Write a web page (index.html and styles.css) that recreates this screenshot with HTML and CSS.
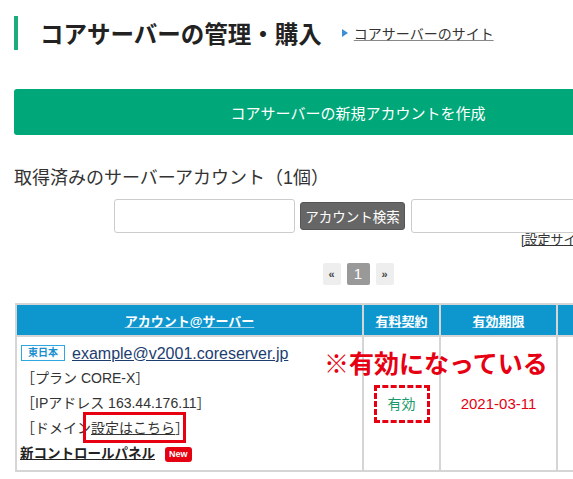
FILE: index.html
```html
<!DOCTYPE html>
<html lang="ja">
  <head>
    <meta charset="UTF-8" />
    <meta name="viewport" content="width=device-width, initial-scale=1.0" />
    <title>コアサーバーの管理・購入</title>
    <link rel="stylesheet" href="styles.css">
  </head>
  <body>
    <div class="main">
      <div class="page-title">
        <h1>コアサーバーの管理・購入</h1>
        <a class="site-link" href="#">コアサーバーのサイト</a>
      </div>

      <button type="button" class="create">コアサーバーの新規アカウントを作成</button>

      <h2 class="section-title">取得済みのサーバーアカウント（1個）</h2>

      <div class="search">
        <input type="text" class="search-input">
        <button type="button" class="search-btn">アカウント検索</button>
        <input type="text" class="search-input wide">
      </div>
      <div class="setting-link"><a href="#">[設定サイト一覧]</a></div>

      <div class="pager">
        <span class="page">«</span>
        <span class="page current">1</span>
        <span class="page">»</span>
      </div>

      <div class="accounts">
        <table class="account-table">
          <tr>
            <th class="col-account"><a href="#">アカウント@サーバー</a></th>
            <th class="col-paid"><a href="#">有料契約</a></th>
            <th class="col-limit"><a href="#">有効期限</a></th>
            <th class="col-extra"></th>
          </tr>
          <tr>
            <td class="account-cell">
              <div class="account-head">
                <span class="region">東日本</span>
                <a class="account-name" href="#">example@v2001.coreserver.jp</a>
              </div>
              <div class="info">［プラン CORE-X］</div>
              <div class="info">［IPアドレス 163.44.176.11］</div>
              <div class="info">［ドメイン<span class="marked"><a href="#">設定はこちら</a>］</span></div>
              <div class="info"><a class="panel-link" href="#">新コントロールパネル</a><span class="new">New</span></div>
            </td>
            <td class="center"><span class="active">有効</span></td>
            <td class="center"><span class="limit">2021-03-11</span></td>
            <td></td>
          </tr>
        </table>
        <p class="note">※有効になっている</p>
      </div>
    </div>
  </body>
</html>
```

FILE: styles.css
```css
html, body {
  overflow: hidden;
}
body {
  margin: 0;
  font-family: "Liberation Sans", "Noto Sans CJK JP", sans-serif;
  color: #333;
  background-color: #fff;
}
a {
  color: inherit;
}
.main {
  width: 688px;
  margin-left: 14px;
}
.page-title {
  display: flex;
  align-items: center;
  height: 34px;
  margin-top: 16px;
  border-left: 4px solid #1bad7b;
  padding-left: 22px;
}
.page-title h1 {
  margin: 0;
  font-size: 23.5px;
  font-weight: bold;
  color: #222;
  font-family: "Noto Sans CJK JP", sans-serif;
}
.site-link {
  position: relative;
  margin-left: 32px;
  font-size: 14px;
  color: #333;
  text-decoration-color: #888;
}
.site-link::before {
  content: "";
  position: absolute;
  left: -12px;
  top: 6px;
  border-left: 6px solid #3d8fd4;
  border-top: 4px solid transparent;
  border-bottom: 4px solid transparent;
}
.create {
  display: block;
  width: 100%;
  height: 46px;
  margin-top: 39px;
  border: none;
  border-radius: 3px;
  background-color: #00a779;
  color: #fff;
  font-family: "Noto Sans CJK JP", sans-serif;
  font-size: 15px;
}
.section-title {
  margin: 31px 0 0;
  font-size: 18px;
  font-weight: normal;
  line-height: 24px;
  color: #333;
}
.search {
  display: flex;
  justify-content: center;
  align-items: center;
  gap: 5px;
  margin-top: 9px;
}
.search-input {
  width: 181px;
  height: 34px;
  box-sizing: border-box;
  border: 1px solid #ccc;
  border-radius: 3px;
}
.search-input.wide {
  width: 191px;
  margin-left: 1px;
}
.search-btn {
  height: 28px;
  width: 105px;
  padding: 0;
  border: 1px solid #555;
  border-radius: 3px;
  background-color: #666;
  color: #fff;
  font-family: "Noto Sans CJK JP", sans-serif;
  font-size: 13.5px;
}
.setting-link {
  padding-left: 507px;
  font-size: 13px;
  line-height: 14px;
  white-space: nowrap;
}
.pager {
  display: flex;
  justify-content: center;
  gap: 6px;
  margin-top: 16px;
}
.page {
  width: 18px;
  height: 22px;
  line-height: 22px;
  text-align: center;
  background-color: #eee;
  border-radius: 2px;
  font-size: 11px;
  font-weight: bold;
  color: #444;
}
.page.current {
  width: 23px;
  background-color: #999;
  color: #fff;
  font-size: 15px;
  font-weight: normal;
}
.accounts {
  position: relative;
  margin: 18px 0 0 1px;
}
.account-table {
  table-layout: fixed;
  width: 688px;
  border-spacing: 0;
  border-top: 2px solid #d5d5d5;
  border-left: 2px solid #d5d5d5;
}
.account-table th,
.account-table td {
  box-sizing: border-box;
  border-right: 2px solid #d5d5d5;
  border-bottom: 2px solid #d5d5d5;
  padding: 0;
}
.account-table th {
  height: 32px;
  background-color: #0e97cf;
  color: #fff;
  font-size: 13px;
  font-weight: bold;
  text-align: center;
}
.account-table th a {
  text-decoration-color: #9fd4ea;
}
.col-account { width: 347px; }
.col-paid { width: 77px; }
.col-limit { width: 117px; }
.account-cell {
  padding: 3px 0 4px 4px !important;
  vertical-align: top;
  font-size: 14px;
  line-height: 25px;
}
.account-head {
  display: flex;
  align-items: center;
  gap: 7px;
  height: 26px;
}
.region {
  width: 44px;
  height: 16px;
  box-sizing: border-box;
  border: 1px solid #2ea7e0;
  text-align: center;
  line-height: 14px;
  font-size: 10px;
  font-weight: bold;
  color: #1a8fd0;
}
.account-name {
  font-size: 16px;
  color: #1c3d70;
}
.info {
  height: 25px;
}
.marked {
  position: relative;
}
.marked::after {
  content: "";
  position: absolute;
  left: -8px;
  right: 3px;
  top: -8px;
  bottom: -7px;
  border: 3px solid #e60012;
}
.panel-link {
  margin-left: -1px;
  font-size: 13.5px;
  font-weight: bold;
  color: #222;
}
.new {
  display: inline-block;
  margin-left: 10px;
  padding: 0 4px;
  height: 15px;
  line-height: 15px;
  border-radius: 3px;
  background-color: #e50012;
  color: #fff;
  font-size: 9px;
  font-weight: bold;
  vertical-align: 1px;
}
.center {
  text-align: center;
  vertical-align: middle;
}
.active {
  display: inline-block;
  padding: 6px 11px;
  line-height: 20px;
  border: 3px dashed #e60012;
  color: #1a9a6a;
  font-size: 14px;
}
.limit {
  color: #e60012;
  font-size: 15px;
}
.note {
  position: absolute;
  left: 309px;
  top: 46px;
  margin: 0;
  font-family: "Noto Sans CJK JP", sans-serif;
  font-size: 25px;
  line-height: 26px;
  font-weight: bold;
  color: #e60012;
  white-space: nowrap;
}
```
